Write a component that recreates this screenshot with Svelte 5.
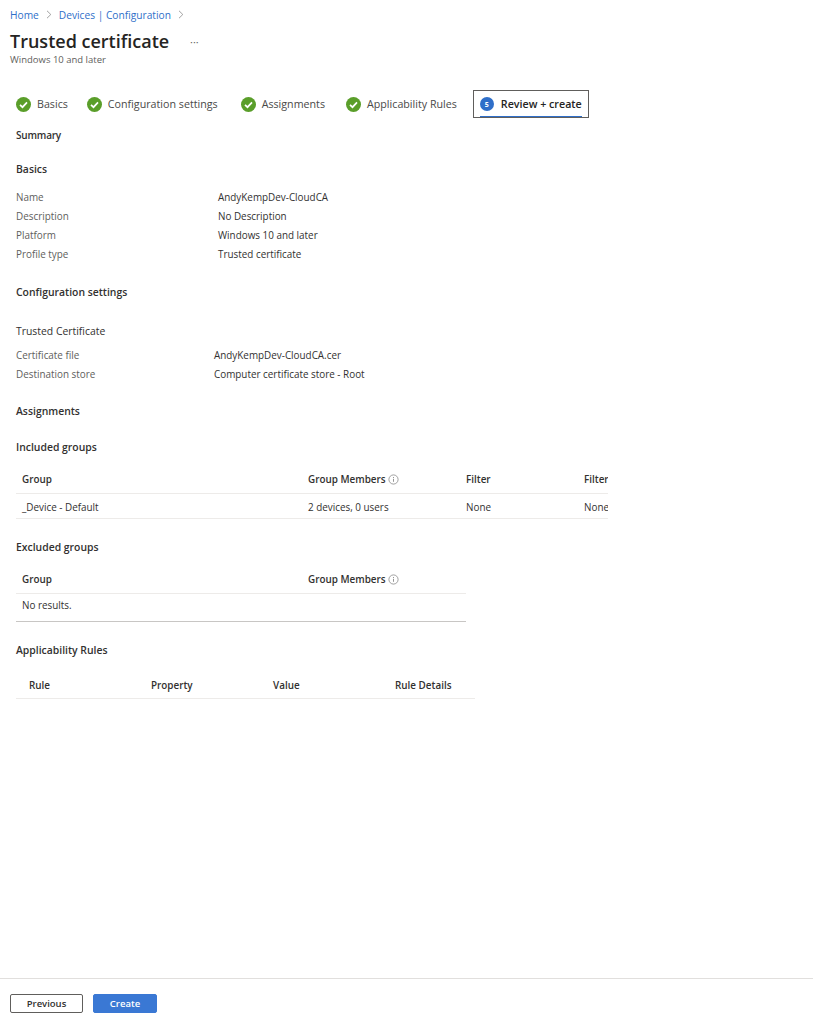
<script>
  const steps = ['Basics', 'Configuration settings', 'Assignments', 'Applicability Rules'];
  const basics = [
    ['Name', 'AndyKempDev-CloudCA'],
    ['Description', 'No Description'],
    ['Platform', 'Windows 10 and later'],
    ['Profile type', 'Trusted certificate']
  ];
  const certificate = [
    ['Certificate file', 'AndyKempDev-CloudCA.cer'],
    ['Destination store', 'Computer certificate store - Root']
  ];
</script>

{#snippet info()}
  <svg class="info" width="11" height="11" viewBox="0 0 11 11">
    <circle cx="5.5" cy="5.5" r="4.6" fill="none" stroke="#8a8a8a" stroke-width="0.8" />
    <path d="M5.5 4.8v3M5.5 3v1" stroke="#8a8a8a" stroke-width="0.9" fill="none" />
  </svg>
{/snippet}

<div class="page">
  <main>
    <nav class="crumbs">
      <span class="link">Home</span>
      <svg width="6" height="9" viewBox="0 0 6 9"><path d="M1 .8 4.8 4.5 1 8.2" fill="none" stroke="#8a8a8a" stroke-width="0.8" /></svg>
      <span class="link">Devices | Configuration</span>
      <svg width="6" height="9" viewBox="0 0 6 9"><path d="M1 .8 4.8 4.5 1 8.2" fill="none" stroke="#8a8a8a" stroke-width="0.8" /></svg>
    </nav>

    <div class="title-row">
      <h1>Trusted certificate</h1>
      <span class="more">···</span>
    </div>
    <p class="subtitle">Windows 10 and later</p>

    <div class="steps">
      {#each steps as step}
        <div class="step">
          <svg width="15" height="15" viewBox="0 0 15 15">
            <circle cx="7.5" cy="7.5" r="7.5" fill="#5a9e2a" />
            <path d="M4 7.8 6.5 10.2 11 5.4" fill="none" stroke="#fff" stroke-width="1.7" />
          </svg>
          <span>{step}</span>
        </div>
      {/each}
      <div class="step current">
        <span class="num">5</span>
        <span>Review + create</span>
      </div>
    </div>

    <div class="content">
      <h2 class="summary">Summary</h2>

      <h2 class="basics">Basics</h2>
      <dl class="props">
        {#each basics as [label, value]}
          <dt>{label}</dt>
          <dd>{value}</dd>
        {/each}
      </dl>

      <h2 class="config">Configuration settings</h2>
      <h3>Trusted Certificate</h3>
      <dl class="props cert">
        {#each certificate as [label, value]}
          <dt>{label}</dt>
          <dd>{value}</dd>
        {/each}
      </dl>

      <h2 class="assign">Assignments</h2>

      <h2 class="included">Included groups</h2>
      <div class="table included-table">
        <div class="row head">
          <span>Group</span>
          <span>Group Members {@render info()}</span>
          <span>Filter</span>
          <span>Filter</span>
        </div>
        <div class="row">
          <span>_Device - Default</span>
          <span>2 devices, 0 users</span>
          <span>None</span>
          <span>None</span>
        </div>
      </div>

      <h2 class="excluded">Excluded groups</h2>
      <div class="table excluded-table">
        <div class="row head">
          <span>Group</span>
          <span>Group Members {@render info()}</span>
        </div>
        <div class="row">
          <span>No results.</span>
        </div>
      </div>

      <h2 class="rules">Applicability Rules</h2>
      <div class="table rules-table">
        <div class="row head">
          <span>Rule</span>
          <span>Property</span>
          <span>Value</span>
          <span>Rule Details</span>
        </div>
      </div>
    </div>
  </main>

  <footer>
    <button class="secondary">Previous</button>
    <button class="primary">Create</button>
  </footer>
</div>

<style>
  :global(body) {
    margin: 0;
    background: #fff;
    font-family: "Open Sans", "Noto Sans", sans-serif;
    font-size: 9.9px;
    color: #323130;
  }

  .page {
    height: 1024px;
    display: flex;
    flex-direction: column;
    overflow: hidden;
  }

  main {
    flex: 1;
    padding: 7px 0 0 10px;
  }

  .crumbs {
    display: flex;
    align-items: center;
    gap: 7px;
    height: 15px;
    font-size: 10.2px;
  }

  .link {
    color: #2f6fc9;
  }

  .title-row {
    display: flex;
    align-items: center;
    margin-top: 8px;
    height: 22px;
  }

  h1 {
    margin: 0;
    font-size: 18px;
    font-weight: 600;
    color: #252423;
    width: 180px;
  }

  .more {
    color: #666;
    font-size: 11px;
  }

  .subtitle {
    margin: 1px 0 0;
    font-size: 9.5px;
    line-height: 13px;
    color: #605e5c;
  }

  .steps {
    display: flex;
    align-items: center;
    margin: 24px 0 0 6px;
    height: 28px;
  }

  .step {
    display: flex;
    align-items: center;
    gap: 6px;
    margin-right: 20px;
    color: #4a4948;
    font-size: 10.7px;
  }

  .step:nth-child(1) { margin-right: 19px; }
  .step:nth-child(2) { margin-right: 23px; }
  .step:nth-child(3) { margin-right: 21px; }
  .step:nth-child(4) { margin-right: 16px; }

  .step.current {
    margin: 0;
    padding: 0 6px;
    gap: 7px;
    height: 28px;
    box-sizing: border-box;
    border: 1px solid #605e5c;
    color: #252423;
    font-weight: 600;
    position: relative;
  }

  .step.current::after {
    content: '';
    position: absolute;
    left: 6px;
    right: 6px;
    bottom: 0;
    height: 1.5px;
    background: #2f6fc9;
  }

  .num {
    width: 14px;
    height: 14px;
    border-radius: 50%;
    background: #2f6fc9;
    color: #fff;
    font-size: 7px;
    font-weight: 700;
    display: flex;
    align-items: center;
    justify-content: center;
  }

  .content {
    margin: 10px 0 0 6px;
  }

  h2 {
    margin: 0;
    font-size: 10.4px;
    line-height: 14px;
    font-weight: 600;
    color: #323130;
  }

  h3 {
    margin: 25px 0 0;
    font-size: 10.4px;
    line-height: 14px;
    font-weight: 400;
    color: #323130;
  }

  .summary { font-size: 10px; letter-spacing: -0.2px; }
  .basics { margin-top: 20px; }
  .config { margin-top: 22px; }
  .assign { margin-top: 21px; }
  .included { margin-top: 22px; }
  .excluded { margin-top: 21px; }
  .rules { margin-top: 21px; }

  .props {
    display: grid;
    grid-template-columns: 202px 1fr;
    grid-auto-rows: 19px;
    align-items: center;
    margin: 11px 0 0;
  }

  .props.cert {
    grid-template-columns: 198px 1fr;
    margin-top: 7px;
  }

  dt {
    color: #605e5c;
  }

  dd {
    margin: 0;
    color: #323130;
  }

  .table {
    margin-top: 11px;
  }

  .row {
    display: grid;
    align-items: center;
    height: 25px;
    border-bottom: 1px solid #edebe9;
    box-sizing: border-box;
    padding: 2px 0 0 6px;
  }

  .row.head {
    height: 29px;
    padding: 0 0 1px 6px;
    font-weight: 600;
  }

  .included-table { width: 592px; overflow: hidden; }
  .included-table .row { grid-template-columns: 286px 158px 118px 30px; white-space: nowrap; }
  .excluded-table { width: 450px; border-bottom: 1px solid #c8c6c4; }
  .excluded-table .row { grid-template-columns: 286px 1fr; }
  .excluded-table .row:last-child { grid-template-columns: 1fr; border-bottom: 0; height: 27px; padding: 0 0 5px 6px; }
  .rules-table { width: 459px; margin-top: 14px; }
  .rules-table .row { grid-template-columns: 122px 122px 122px 1fr; height: 28px; padding: 0 0 0 13px; }

  .info {
    vertical-align: -2px;
  }

  footer {
    height: 30px;
    border-top: 1px solid #e1dfdd;
    display: flex;
    gap: 10px;
    padding: 15px 0 0 10px;
  }

  button {
    height: 19px;
    font-family: inherit;
    font-size: 9.5px;
    font-weight: 600;
    border-radius: 2px;
    padding: 0;
  }

  .secondary {
    width: 73px;
    background: #fff;
    border: 1px solid #605e5c;
    color: #323130;
  }

  .primary {
    width: 64px;
    background: #3a78d4;
    border: 1px solid #3a78d4;
    color: #fff;
  }
</style>
